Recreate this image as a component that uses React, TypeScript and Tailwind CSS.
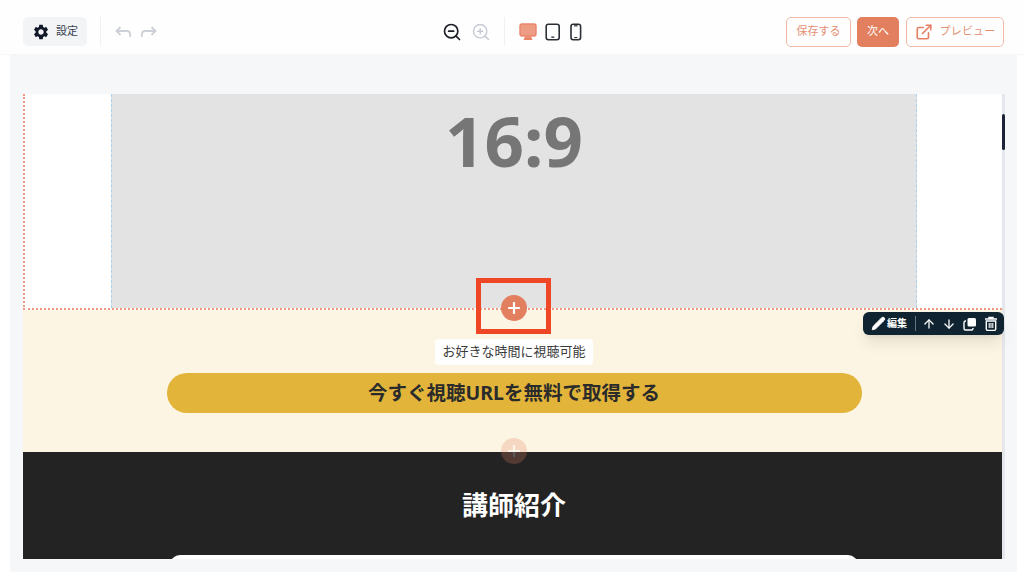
import React from "react";
import { ZoomIn, ZoomOut, ExternalLink, Pencil, ArrowUp, ArrowDown } from "lucide-react";
import { MdSettings } from "react-icons/md";

const font = { fontFamily: '"Noto Sans", "Noto Sans CJK JP", sans-serif' };

function Plus({ faded }: { faded?: boolean }) {
  return (
    <div className={"absolute left-[478px] w-[26px] h-[26px] rounded-full bg-[#e27f5f] flex items-center justify-center " + (faded ? "opacity-25" : "")}>
      <svg width="12" height="12" viewBox="0 0 12 12"><path d="M6 1v10M1 6h10" stroke="#fff" strokeWidth="2.2" strokeLinecap="round" /></svg>
    </div>
  );
}

export default function App() {
  return (
    <div className="w-[1024px] h-[578px] bg-white overflow-hidden flex flex-col" style={font}>
      <header className="h-[55px] shrink-0 relative flex items-center justify-between pl-[23px] pr-[20px] pt-[9px] bg-[#fefefe] border-b border-[#f5f6f8]">
        <div className="flex items-center">
          <div className="w-[64px] h-[29px] rounded-[5px] bg-[#f3f4f6] flex items-center justify-center gap-[6px] text-[11px] text-[#374151]">
            <MdSettings size={18} className="text-[#111827]" />
            <span>設定</span>
          </div>
          <div className="w-px h-[29px] bg-[#f0f1f3] ml-[13px] mr-[14px]" />
          <div className="flex items-center gap-[10px]">
            <svg width="16" height="14" viewBox="0 0 16 14" fill="none" stroke="#cdd0d6" strokeWidth="1.8"><path d="M5.5 2 1.5 6l4 4M1.5 6H12a3 3 0 0 1 3 3v3" /></svg>
            <svg width="16" height="14" viewBox="0 0 16 14" fill="none" stroke="#cdd0d6" strokeWidth="1.8"><path d="M10.5 2l4 4-4 4M14.5 6H4a3 3 0 0 0-3 3v3" /></svg>
          </div>
        </div>
        <div className="absolute left-[442px] top-[17px] h-[29px] flex items-center">
          <ZoomOut size={20} strokeWidth={2} className="text-[#1c1f26]" />
          <ZoomIn size={20} strokeWidth={1.7} className="text-[#c6cad2] ml-[9px]" />
          <div className="w-px h-[29px] bg-[#f0f1f3] ml-[13px] mr-[14px]" />
          <svg width="18" height="18" viewBox="0 0 18 18" className="mr-[8px]"><rect x="1" y="1" width="16" height="12" rx="2" fill="#ee9c84" stroke="#e9866a" strokeWidth="1.4" /><path d="M4.5 17h9l-1.5-3.5H6z" fill="#e9866a" /></svg>
          <svg width="16" height="18" viewBox="0 0 16 18" className="mr-[9px]"><rect x="1.2" y="1.2" width="13" height="15.6" rx="2.2" fill="none" stroke="#2b2f36" strokeWidth="1.6" /><rect x="6.3" y="13.5" width="3" height="1.3" fill="#2b2f36" /></svg>
          <svg width="12" height="18" viewBox="0 0 12 18"><rect x="1" y="1.2" width="9.6" height="15.6" rx="2.2" fill="none" stroke="#2b2f36" strokeWidth="1.6" /><rect x="4" y="2.2" width="3.6" height="1.2" fill="#2b2f36" /><rect x="4.3" y="14" width="3" height="1.1" fill="#2b2f36" /></svg>
        </div>
        <div className="flex items-center">
          <div className="w-[65px] h-[30px] rounded-[5px] border border-[#f0b9a6] flex items-center justify-center text-[11px] text-[#e58f73]">保存する</div>
          <div className="w-[42px] h-[30px] ml-[6px] rounded-[5px] bg-[#e27f5f] flex items-center justify-center text-[11px] text-white">次へ</div>
          <div className="w-[98px] h-[30px] ml-[7px] rounded-[5px] border border-[#f0b9a6] flex items-center justify-center gap-[7px] text-[11px] text-[#e58f73]">
            <ExternalLink size={18} strokeWidth={2.2} className="text-[#e58066]" />
            <span className="tracking-[0.2px]">プレビュー</span>
          </div>
        </div>
      </header>

      <main className="ml-[10px] mr-[7px] h-[517px] bg-[#f6f7f9] pt-[39px] pl-[13px] shrink-0">
        <div className="relative w-[982px] h-[465px] flex">
          <div className="w-[979px] h-[465px] flex flex-col overflow-hidden">
            <section className="h-[216px] shrink-0 bg-white border-b-2 border-l-2 border-dotted border-[#ee9a80] flex justify-center pl-[1px]">
              <div className="w-[806px] h-full bg-[#e3e3e3] border-x border-dashed border-[#a9d0ee] flex justify-center">
                <span className="text-[69px] font-bold text-[#767676] leading-[92px]">16:9</span>
              </div>
            </section>
            <section className="h-[142px] shrink-0 bg-[#fdf5e3] flex flex-col items-center pt-[29px] pl-[3px]">
              <div className="h-[26px] px-[7.5px] bg-white rounded-[4px] flex items-center text-[13px] text-[#3b3b3b]">お好きな時間に視聴可能</div>
              <div className="w-[695px] h-[40px] mt-[8px] rounded-full bg-[#e2b53a] flex items-center justify-center text-[19.5px] font-bold text-[#2b2b2b]">今すぐ視聴URLを無料で取得する</div>
            </section>
            <section className="h-[107px] shrink-0 bg-[#232323] flex flex-col items-center pl-[3px]">
              <h2 className="text-[26px] font-bold text-white mt-[34px] leading-[38px]">講師紹介</h2>
              <div className="w-[688px] h-[20px] mt-[31px] rounded-t-[10px] bg-white shrink-0" />
            </section>
          </div>
          <div className="w-[3px] h-[465px] bg-[#e6e7ec] relative">
            <div className="absolute top-[20px] left-0 w-[3px] h-[36px] rounded-full bg-[#1e2438]" />
          </div>

          <div className="absolute left-[453px] top-[184px] w-[75px] h-[56px] border-[5px] border-[#ef4726]" />
          <div className="absolute left-0 top-[201px] h-[26px]"><Plus /></div>
          <div className="absolute left-0 top-[344px] h-[26px]"><Plus faded /></div>

          <div className="absolute left-[840px] top-[218px] w-[141px] h-[23px] rounded-[6px] bg-[#102330] shadow-lg flex items-center pl-[8px] text-white">
            <Pencil size={15} fill="#fff" strokeWidth={1.5} />
            <span className="text-[10px] font-bold ml-[1px]">編集</span>
            <div className="w-px h-[15px] bg-[#66737c] ml-[8px] mr-[6px]" />
            <ArrowUp size={14} strokeWidth={2.2} />
            <ArrowDown size={14} strokeWidth={2.2} className="ml-[6px]" />
            <svg width="14" height="14" viewBox="0 0 14 14" className="ml-[7px]"><rect x="4.5" y="1" width="8.5" height="8.5" rx="1.5" fill="#fff" /><path d="M3 4H2.5A1.5 1.5 0 0 0 1 5.5v6A1.5 1.5 0 0 0 2.5 13h6A1.5 1.5 0 0 0 10 11.5V11" fill="none" stroke="#fff" strokeWidth="1.4" /></svg>
            <svg width="14" height="15" viewBox="0 0 14 15" className="ml-[7px]"><path d="M1 3h12M5 3V1.5h4V3" fill="none" stroke="#fff" strokeWidth="1.4" /><path d="M2.3 5h9.4v8a1.5 1.5 0 0 1-1.5 1.5H3.8A1.5 1.5 0 0 1 2.3 13z" fill="none" stroke="#fff" strokeWidth="1.4" /><path d="M5.2 7v5M7 7v5M8.8 7v5" stroke="#fff" strokeWidth="1.1" /></svg>
          </div>
        </div>
      </main>
    </div>
  );
}
